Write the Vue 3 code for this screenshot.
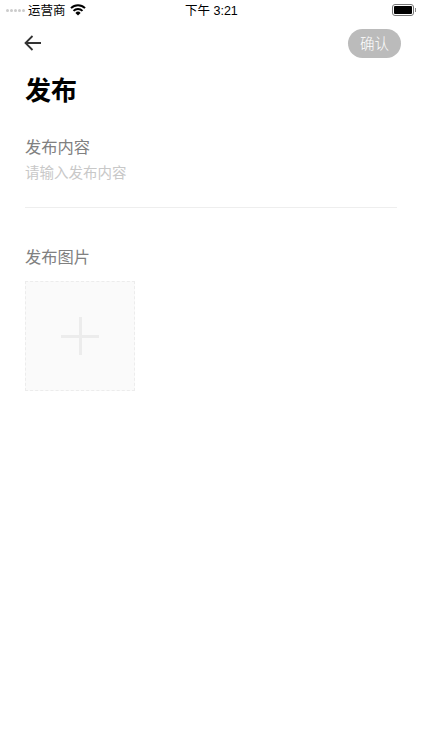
<template>
  <div class="page">
    <div class="status-bar">
      <div class="status-left">
        <span class="signal"><i v-for="n in 5" :key="n"></i></span>
        <span class="carrier">运营商</span>
        <svg class="wifi" width="16" height="12" viewBox="0 0 16 12">
          <path d="M8 11.6 5.4 8.9a3.6 3.6 0 0 1 5.2 0Z" fill="#000" />
          <path d="M3.5 6.9a6.3 6.3 0 0 1 9 0" fill="none" stroke="#000" stroke-width="2" />
          <path d="M1 4.1a10 10 0 0 1 14 0" fill="none" stroke="#000" stroke-width="2" />
        </svg>
      </div>
      <span class="time">下午 3:21</span>
      <div class="battery">
        <span class="battery-body"><span class="battery-fill"></span></span>
        <span class="battery-cap"></span>
      </div>
    </div>

    <div class="nav">
      <svg class="back" width="20" height="18" viewBox="0 0 20 18">
        <path d="M18 9H3M9.5 2 2.5 9l7 7" fill="none" stroke="#333" stroke-width="1.8" />
      </svg>
      <button class="confirm">确认</button>
    </div>

    <h1 class="title">发布</h1>

    <div class="field">
      <div class="label">发布内容</div>
      <div class="placeholder">请输入发布内容</div>
    </div>

    <div class="images">
      <div class="label">发布图片</div>
      <div class="upload">
        <span class="plus"></span>
      </div>
    </div>
  </div>
</template>

<script setup>
</script>

<style>
html,
body {
  margin: 0;
  background: #fff;
}
</style>

<style scoped>
.page {
  width: 422px;
  height: 750px;
  overflow: hidden;
  background: #fff;
  font-family: "Liberation Sans", "Noto Sans CJK SC", sans-serif;
}

.status-bar {
  height: 20px;
  padding: 0 6px 0 6px;
  display: flex;
  align-items: center;
  justify-content: space-between;
  position: relative;
  font-size: 12.5px;
  color: #000;
}

.status-left {
  display: flex;
  align-items: center;
}

.signal {
  display: flex;
  gap: 1px;
  margin-right: 3px;
}

.signal i {
  width: 3px;
  height: 3px;
  border-radius: 50%;
  background: #ccc;
}

.carrier {
  line-height: 18px;
  padding-top: 2px;
}

.wifi {
  margin-left: 4px;
}

.time {
  position: absolute;
  left: 185px;
  top: 3px;
  line-height: 16px;
}

.battery {
  display: flex;
  align-items: center;
}

.battery-body {
  width: 22px;
  height: 12px;
  box-sizing: border-box;
  border: 1px solid #777;
  border-radius: 3px;
  padding: 1px;
  display: flex;
}

.battery-fill {
  flex: 1;
  background: #000;
  border-radius: 1px;
}

.battery-cap {
  width: 1px;
  height: 4px;
  background: #888;
  margin-left: 1px;
}

.nav {
  height: 30px;
  margin-top: 8px;
  padding: 0 21px 0 23px;
  display: flex;
  align-items: center;
  justify-content: space-between;
}

.back {
  display: block;
}

.confirm {
  width: 53px;
  height: 29px;
  padding: 0 0 2px;
  border: none;
  border-radius: 15px;
  background: #bbb;
  color: #fff;
  font: inherit;
  font-size: 14.5px;
  font-weight: 300;
}

.title {
  margin: 15px 0 0 25px;
  font-size: 26px;
  line-height: 36px;
  font-weight: 700;
  color: #000;
}

.field {
  margin: 26px 25px 0;
  height: 72px;
  border-bottom: 1px solid #eee;
  box-sizing: content-box;
}

.label {
  font-size: 16.3px;
  line-height: 24px;
  color: #808080;
}

.placeholder {
  margin-top: 4px;
  font-size: 14.5px;
  line-height: 20px;
  color: #c8c8c8;
}

.images {
  margin: 37px 25px 0;
}

.upload {
  width: 110px;
  height: 110px;
  margin-top: 12px;
  box-sizing: border-box;
  border: 1px dashed #ececec;
  background: #fafafa;
  display: flex;
  align-items: center;
  justify-content: center;
}

.plus {
  width: 38px;
  height: 38px;
  position: relative;
}

.plus::before,
.plus::after {
  content: "";
  position: absolute;
  background: #ececec;
}

.plus::before {
  left: 0;
  right: 0;
  top: 18px;
  height: 3px;
}

.plus::after {
  top: 0;
  bottom: 0;
  left: 18px;
  width: 3px;
}
</style>
